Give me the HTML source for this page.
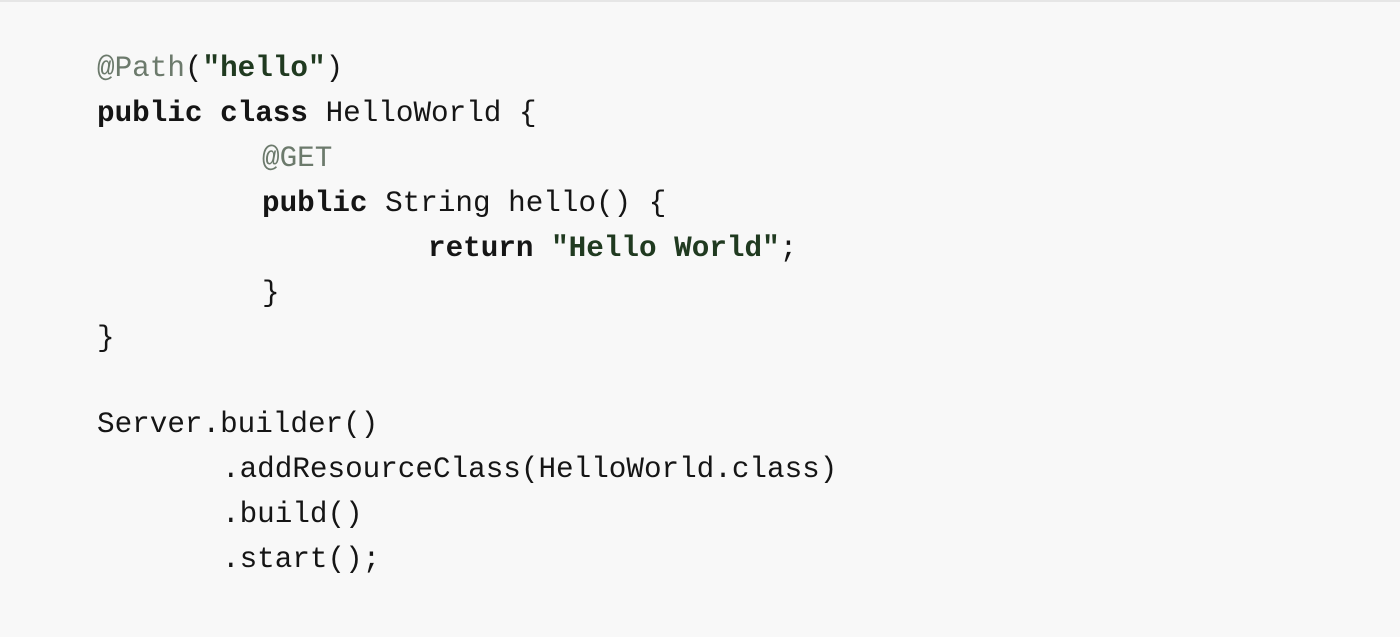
<!DOCTYPE html>
<html><head><meta charset="utf-8"><style>
html,body{margin:0;padding:0;}
body{width:1400px;height:637px;background:#f8f8f8;border-top:2px solid #e6e6e6;box-sizing:border-box;position:relative;overflow:hidden;}
.l{position:absolute;font-family:"Liberation Mono",monospace;font-size:29.3px;line-height:45px;color:#151515;white-space:pre;}
.a{color:#6c7a6c;}
.s{color:#203a20;font-weight:bold;}
b{font-weight:bold;}
</style></head><body>
<div class="l" style="left:97px;top:44px"><span class="a">@Path</span>(<span class="s">"hello"</span>)</div>
<div class="l" style="left:97px;top:89px"><b>public class</b> HelloWorld {</div>
<div class="l" style="left:262px;top:134px"><span class="a">@GET</span></div>
<div class="l" style="left:262px;top:179px"><b>public</b> String hello() {</div>
<div class="l" style="left:428px;top:224px"><b>return</b> <span class="s">"Hello World"</span>;</div>
<div class="l" style="left:262px;top:269px">}</div>
<div class="l" style="left:97px;top:314px">}</div>
<div class="l" style="left:97px;top:400px">Server.builder()</div>
<div class="l" style="left:222px;top:445px">.addResourceClass(HelloWorld.class)</div>
<div class="l" style="left:222px;top:490px">.build()</div>
<div class="l" style="left:222px;top:535px">.start();</div>
</body></html>
